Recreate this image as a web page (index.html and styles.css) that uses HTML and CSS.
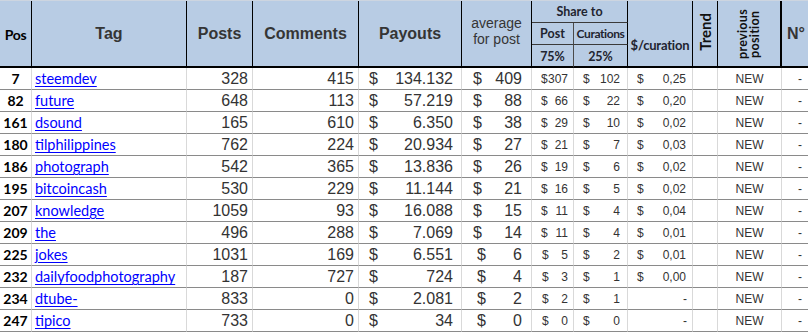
FILE: index.html
```html
<!DOCTYPE html>
<html>
<head>
<meta charset="utf-8">
<link rel="stylesheet" href="styles.css">
</head>
<body>
<div class="sheet">
  <div class="h span3 cal-b pos-h">Pos</div>
  <div class="h span3 big">Tag</div>
  <div class="h span3 big">Posts</div>
  <div class="h span3 big">Comments</div>
  <div class="h span3 big">Payouts</div>
  <div class="h span3 avg-h">average<br>for post</div>
  <div class="h share-h cal-b">Share to</div>
  <div class="h sub1 sub-left cal-b">Post</div>
  <div class="h sub1 cal-b">Curations</div>
  <div class="h sub2 sub-left cal-b">75%</div>
  <div class="h sub2 cal-b">25%</div>
  <div class="h span3 cal-b cur-h">$/curation</div>
  <div class="h span3 cal-b"><span class="vert trend">Trend</span></div>
  <div class="h span3 cal-b prev-h"><span class="vert prev">previous<br>position</span></div>
  <div class="h span3 big no-h">N°</div>

  <div class="c pos">7</div><div class="c tag"><a href="#">steemdev</a></div><div class="c num">328</div><div class="c num">415</div><div class="c acc pay"><span>$</span><span>134.132</span></div><div class="c acc avg"><span>$</span><span>409</span></div><div class="c acc sm sp"><span>$</span><span>307</span></div><div class="c acc sm sc"><span>$</span><span>102</span></div><div class="c acc sm scu"><span>$</span><span>0,25</span></div><div class="c"></div><div class="c new">NEW</div><div class="c dash">-</div>
  <div class="c pos">82</div><div class="c tag"><a href="#">future</a></div><div class="c num">648</div><div class="c num">113</div><div class="c acc pay"><span>$</span><span>57.219</span></div><div class="c acc avg"><span>$</span><span>88</span></div><div class="c acc sm sp"><span>$</span><span>66</span></div><div class="c acc sm sc"><span>$</span><span>22</span></div><div class="c acc sm scu"><span>$</span><span>0,20</span></div><div class="c"></div><div class="c new">NEW</div><div class="c dash">-</div>
  <div class="c pos">161</div><div class="c tag"><a href="#">dsound</a></div><div class="c num">165</div><div class="c num">610</div><div class="c acc pay"><span>$</span><span>6.350</span></div><div class="c acc avg"><span>$</span><span>38</span></div><div class="c acc sm sp"><span>$</span><span>29</span></div><div class="c acc sm sc"><span>$</span><span>10</span></div><div class="c acc sm scu"><span>$</span><span>0,02</span></div><div class="c"></div><div class="c new">NEW</div><div class="c dash">-</div>
  <div class="c pos">180</div><div class="c tag"><a href="#">tilphilippines</a></div><div class="c num">762</div><div class="c num">224</div><div class="c acc pay"><span>$</span><span>20.934</span></div><div class="c acc avg"><span>$</span><span>27</span></div><div class="c acc sm sp"><span>$</span><span>21</span></div><div class="c acc sm sc"><span>$</span><span>7</span></div><div class="c acc sm scu"><span>$</span><span>0,03</span></div><div class="c"></div><div class="c new">NEW</div><div class="c dash">-</div>
  <div class="c pos">186</div><div class="c tag"><a href="#">photograph</a></div><div class="c num">542</div><div class="c num">365</div><div class="c acc pay"><span>$</span><span>13.836</span></div><div class="c acc avg"><span>$</span><span>26</span></div><div class="c acc sm sp"><span>$</span><span>19</span></div><div class="c acc sm sc"><span>$</span><span>6</span></div><div class="c acc sm scu"><span>$</span><span>0,02</span></div><div class="c"></div><div class="c new">NEW</div><div class="c dash">-</div>
  <div class="c pos">195</div><div class="c tag"><a href="#">bitcoincash</a></div><div class="c num">530</div><div class="c num">229</div><div class="c acc pay"><span>$</span><span>11.144</span></div><div class="c acc avg"><span>$</span><span>21</span></div><div class="c acc sm sp"><span>$</span><span>16</span></div><div class="c acc sm sc"><span>$</span><span>5</span></div><div class="c acc sm scu"><span>$</span><span>0,02</span></div><div class="c"></div><div class="c new">NEW</div><div class="c dash">-</div>
  <div class="c pos">207</div><div class="c tag"><a href="#">knowledge</a></div><div class="c num">1059</div><div class="c num">93</div><div class="c acc pay"><span>$</span><span>16.088</span></div><div class="c acc avg"><span>$</span><span>15</span></div><div class="c acc sm sp"><span>$</span><span>11</span></div><div class="c acc sm sc"><span>$</span><span>4</span></div><div class="c acc sm scu"><span>$</span><span>0,04</span></div><div class="c"></div><div class="c new">NEW</div><div class="c dash">-</div>
  <div class="c pos">209</div><div class="c tag"><a href="#">the</a></div><div class="c num">496</div><div class="c num">288</div><div class="c acc pay"><span>$</span><span>7.069</span></div><div class="c acc avg"><span>$</span><span>14</span></div><div class="c acc sm sp"><span>$</span><span>11</span></div><div class="c acc sm sc"><span>$</span><span>4</span></div><div class="c acc sm scu"><span>$</span><span>0,01</span></div><div class="c"></div><div class="c new">NEW</div><div class="c dash">-</div>
  <div class="c pos">225</div><div class="c tag"><a href="#">jokes</a></div><div class="c num">1031</div><div class="c num">169</div><div class="c acc pay"><span>$</span><span>6.551</span></div><div class="c acc avg one"><span>$</span><span>6</span></div><div class="c acc sm sp one"><span>$</span><span>5</span></div><div class="c acc sm sc"><span>$</span><span>2</span></div><div class="c acc sm scu"><span>$</span><span>0,01</span></div><div class="c"></div><div class="c new">NEW</div><div class="c dash">-</div>
  <div class="c pos">232</div><div class="c tag"><a href="#">dailyfoodphotography</a></div><div class="c num">187</div><div class="c num">727</div><div class="c acc pay"><span>$</span><span>724</span></div><div class="c acc avg one"><span>$</span><span>4</span></div><div class="c acc sm sp one"><span>$</span><span>3</span></div><div class="c acc sm sc"><span>$</span><span>1</span></div><div class="c acc sm scu"><span>$</span><span>0,00</span></div><div class="c"></div><div class="c new">NEW</div><div class="c dash">-</div>
  <div class="c pos">234</div><div class="c tag"><a href="#">dtube-</a></div><div class="c num">833</div><div class="c num">0</div><div class="c acc pay"><span>$</span><span>2.081</span></div><div class="c acc avg one"><span>$</span><span>2</span></div><div class="c acc sm sp one"><span>$</span><span>2</span></div><div class="c acc sm sc"><span>$</span><span>1</span></div><div class="c acc sm scu nil"><span>-</span></div><div class="c"></div><div class="c new">NEW</div><div class="c dash">-</div>
  <div class="c pos">247</div><div class="c tag"><a href="#">tipico</a></div><div class="c num">733</div><div class="c num">0</div><div class="c acc pay"><span>$</span><span>34</span></div><div class="c acc avg one"><span>$</span><span>0</span></div><div class="c acc sm sp one"><span>$</span><span>0</span></div><div class="c acc sm sc"><span>$</span><span>0</span></div><div class="c acc sm scu nil"><span>-</span></div><div class="c"></div><div class="c new">NEW</div><div class="c dash">-</div>
</div>
</body>
</html>
```
FILE: styles.css
```css
body { margin: 0; background: #fff; }

.sheet {
  display: grid;
  width: 808px;
  grid-template-columns: 32px 155px 66px 106px 103px 70px 42px 54px 65px 25px 64px 26px;
  grid-template-rows: 22px 22px 23px;
  grid-auto-rows: 22px;
  border-top: 1px solid #cdd5e0;
  font-family: "Liberation Sans", Arial, sans-serif;
  color: #333;
}

/* header */
.h {
  background: #b8cce4;
  box-sizing: border-box;
  border-right: 1px solid #000;
  display: flex;
  align-items: center;
  justify-content: center;
  text-align: center;
}
.span3 {
  grid-row: 1 / span 3;
  border-bottom: 2px solid #000;
}
.big {
  font-weight: bold;
  font-size: 16px;
  color: #353535;
}
.cal-b {
  font-family: "Lato", "Carlito", sans-serif;
  font-weight: bold;
  color: #1f2430;
}
.pos-h { font-size: 14px; color: #000; padding-top: 2px; letter-spacing: -0.3px; }
.avg-h {
  font-size: 14px;
  line-height: 16px;
  color: #353535;
  padding-bottom: 6px;
}
.share-h {
  grid-column: 7 / span 2;
  grid-row: 1;
  border-bottom: 1px solid #3a3a3a;
  font-size: 12.5px;
}
.sub1 {
  grid-row: 2;
  border-bottom: 1px solid #3a3a3a;
  font-size: 12.5px;
}
.sub1 + .sub1 { font-size: 12px; letter-spacing: -0.4px; }
.sub2 {
  grid-row: 3;
  border-bottom: 2px solid #000;
  font-size: 12.5px;
  padding-top: 1px;
}
.sub-left { border-right-color: #4a4a4a; }
.cur-h { font-size: 13px; padding-top: 22px; letter-spacing: -0.2px; }
.prev-h { border-right-width: 2px; }
.no-h { border-right: none; padding-left: 2px; }

.vert {
  writing-mode: vertical-rl;
  transform: rotate(180deg);
}
.trend { font-size: 15px; margin-top: -4px; color: #111; }
.prev { font-size: 12.5px; line-height: 12px; letter-spacing: 0.3px; color: #111; }

/* body */
.c {
  box-sizing: border-box;
  border-right: 1px solid #d9d9d9;
  border-bottom: 1px solid #8a8a8a;
  display: flex;
  align-items: center;
  font-size: 16px;
  white-space: nowrap;
  overflow: hidden;
}
.pos {
  justify-content: center;
  font-family: "Lato", "Carlito", sans-serif;
  font-weight: bold;
  font-size: 14px;
  color: #000;
}
.tag { padding-left: 3px; }
.tag a {
  font-family: "Lato", "Carlito", sans-serif;
  font-size: 14.5px;
  color: #0000ff;
  text-decoration: underline;
  text-underline-offset: 2px;
}
.num { justify-content: flex-end; padding-right: 4px; }
.acc { justify-content: space-between; }
.pay { padding: 0 8px 0 10px; }
.avg { padding: 0 9px 0 11px; }
.avg.one { padding-left: 15px; }
.sm { font-size: 12px; }
.sp { padding: 0 5px 0 9px; }
.sp.one { padding-left: 10px; }
.sc { padding: 0 7px 0 9px; }
.scu { padding: 0 6px 0 9px; }
.scu.nil { justify-content: flex-end; padding-right: 5px; }
.new { justify-content: center; font-size: 12px; }
.dash { justify-content: flex-end; padding-right: 6px; font-size: 12px; border-right: none; }
```
